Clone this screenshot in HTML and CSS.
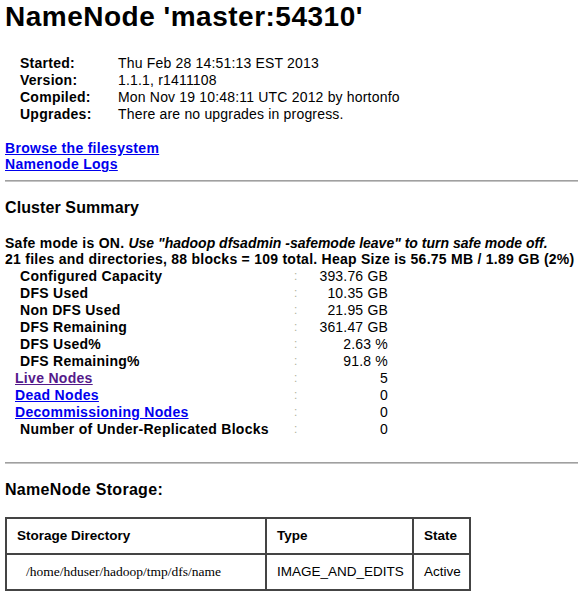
FILE: index.html
```html
<!DOCTYPE html>
<html>
<head>
<meta charset="utf-8">
<title>Hadoop NameNode master:54310</title>
<link rel="stylesheet" href="styles.css">
</head>
<body>
<h1 class="title">NameNode 'master:54310'</h1>

<div class="info">
  <div class="info-label">Started:</div><div class="info-value">Thu Feb 28 14:51:13 EST 2013</div>
  <div class="info-label">Version:</div><div class="info-value">1.1.1, r1411108</div>
  <div class="info-label">Compiled:</div><div class="info-value">Mon Nov 19 10:48:11 UTC 2012 by hortonfo</div>
  <div class="info-label">Upgrades:</div><div class="info-value">There are no upgrades in progress.</div>
</div>

<div class="links">
  <a class="link" href="#">Browse the filesystem</a><br>
  <a class="link" href="#">Namenode Logs</a>
</div>

<hr class="rule rule-top">

<h3 class="section">Cluster Summary</h3>

<p class="summary">Safe mode is ON. <em>Use "hadoop dfsadmin -safemode leave" to turn safe mode off.</em><br>21 files and directories, 88 blocks = 109 total. Heap Size is 56.75 MB / 1.89 GB (2%)</p>

<div class="stats">
  <div class="stat-label">Configured Capacity</div><div class="sep">:</div><div class="stat-value">393.76 GB</div>
  <div class="stat-label">DFS Used</div><div class="sep">:</div><div class="stat-value">10.35 GB</div>
  <div class="stat-label">Non DFS Used</div><div class="sep">:</div><div class="stat-value">21.95 GB</div>
  <div class="stat-label">DFS Remaining</div><div class="sep">:</div><div class="stat-value">361.47 GB</div>
  <div class="stat-label">DFS Used%</div><div class="sep">:</div><div class="stat-value">2.63 %</div>
  <div class="stat-label">DFS Remaining%</div><div class="sep">:</div><div class="stat-value">91.8 %</div>
  <div class="stat-link"><a class="link visited" href="#">Live Nodes</a></div><div class="sep">:</div><div class="stat-value">5</div>
  <div class="stat-link"><a class="link" href="#">Dead Nodes</a></div><div class="sep">:</div><div class="stat-value">0</div>
  <div class="stat-link"><a class="link" href="#">Decommissioning Nodes</a></div><div class="sep">:</div><div class="stat-value">0</div>
  <div class="stat-label">Number of Under-Replicated Blocks</div><div class="sep">:</div><div class="stat-value">0</div>
</div>

<hr class="rule rule-bottom">

<h3 class="section section-storage">NameNode Storage:</h3>

<table class="storage">
  <colgroup>
    <col class="col-dir">
    <col class="col-type">
    <col class="col-state">
  </colgroup>
  <thead>
    <tr><th>Storage Directory</th><th>Type</th><th>State</th></tr>
  </thead>
  <tbody>
    <tr><td class="path">/home/hduser/hadoop/tmp/dfs/name</td><td>IMAGE_AND_EDITS</td><td>Active</td></tr>
  </tbody>
</table>
</body>
</html>
```

FILE: styles.css
```css
html, body {
  background: #ffffff;
}

body {
  margin: 0;
  padding: 0 0 0 5px;
  font-family: "Liberation Sans", Arial, sans-serif;
  font-size: 14px;
  letter-spacing: 0.18px;
  color: #000000;
}

.title {
  margin: 1px 0 0;
  font-size: 28px;
  line-height: 32px;
  font-weight: bold;
  letter-spacing: 0.5px;
}

.info {
  display: grid;
  grid-template-columns: 98px auto;
  grid-auto-rows: 17px;
  line-height: 17px;
  margin-top: 22px;
  padding-left: 15px;
}

.info-label {
  font-weight: bold;
  letter-spacing: 0.26px;
}

.links {
  margin-top: 17px;
  line-height: 16px;
}

.link {
  color: #0000ee;
  font-weight: bold;
  letter-spacing: 0.3px;
  text-decoration: underline;
}

.link.visited {
  color: #551a8b;
}

.rule {
  height: 0;
  margin: 8px 0 0;
  border: 0;
  border-top: 1px solid #a0a0a0;
  border-bottom: 1px solid #c4c4c4;
}

.rule-bottom {
  margin-top: 24px;
}

.section {
  margin: 17px 0 0;
  font-size: 16px;
  line-height: 18px;
  font-weight: bold;
  letter-spacing: 0.1px;
}

.section-storage {
  letter-spacing: 0.3px;
}

.summary {
  margin: 18px 0 0;
  line-height: 16px;
  font-weight: bold;
  letter-spacing: 0.26px;
  white-space: nowrap;
}

.summary em {
  font-style: italic;
  letter-spacing: 0;
}

.stats {
  display: grid;
  grid-template-columns: 278px 10px 85px;
  grid-auto-rows: 17px;
  line-height: 17px;
  margin-top: 1px;
  padding-left: 10px;
}

.stat-label {
  font-weight: bold;
  letter-spacing: 0.28px;
  padding-left: 5px;
}

.stat-link {
  padding-left: 0;
}

.sep {
  color: #b4b4a0;
  font-size: 12px;
  padding-left: 1px;
}

.stat-value {
  text-align: right;
}

.storage {
  margin-top: 18px;
  width: 466px;
  table-layout: fixed;
  border-collapse: separate;
  border-spacing: 0;
  border: 1px solid #444444;
  font-size: 13.5px;
  letter-spacing: 0;
}

.col-dir {
  width: 260px;
}

.col-type {
  width: 147px;
}

.storage th,
.storage td {
  border: 1px solid #444444;
  padding: 10px 9px 10px 10px;
  line-height: 14px;
  text-align: left;
  white-space: nowrap;
}

.storage th {
  font-weight: bold;
}

.storage td.path {
  font-family: "Liberation Serif", "Times New Roman", serif;
  font-size: 13.5px;
  padding-left: 19px;
}
```
